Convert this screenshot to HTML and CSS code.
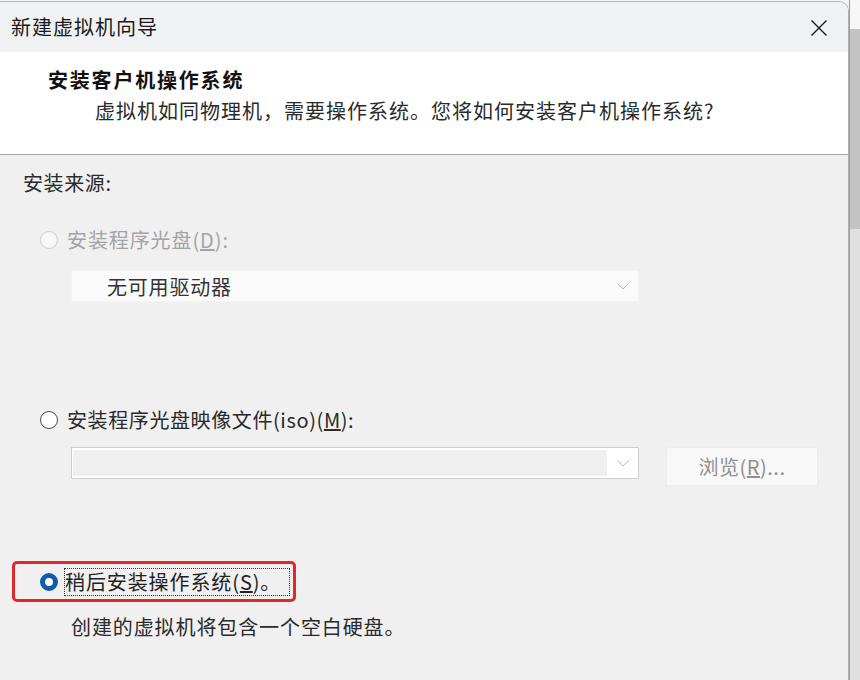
FILE: index.html
```html
<!DOCTYPE html>
<html lang="zh-CN">
<head>
<meta charset="utf-8">
<link rel="stylesheet" href="styles.css">
</head>
<body>
<div class="screen">
  <div class="window">
    <div class="titlebar">
      <span class="title">新建虚拟机向导</span>
      <svg class="close" width="18" height="18" viewBox="0 0 18 18"><path d="M1.5 1.5 L16.5 16.5 M16.5 1.5 L1.5 16.5" stroke="#1a1a1a" stroke-width="1.4" fill="none"/></svg>
    </div>
    <div class="header">
      <div class="heading">安装客户机操作系统</div>
      <div class="subtitle">虚拟机如同物理机，需要操作系统。您将如何安装客户机操作系统?</div>
    </div>
    <div class="content">
      <div class="section-label">安装来源:</div>

      <div class="radio-row disabled">
        <span class="radio"></span>
        <span class="label">安装程序光盘(<u>D</u>):</span>
      </div>
      <div class="select disabled-select">
        <span class="select-text">无可用驱动器</span>
        <svg class="chev" width="12" height="7" viewBox="0 0 12 7"><path d="M0.5 0.5 L6 6 L11.5 0.5" stroke="#b8b8b8" stroke-width="1" fill="none"/></svg>
      </div>

      <div class="radio-row second">
        <span class="radio"></span>
        <span class="label">安装程序光盘映像文件(iso)(<u>M</u>):</span>
      </div>
      <div class="iso-row">
        <div class="combo">
          <div class="combo-field"></div>
          <div class="combo-btn">
            <svg width="12" height="7" viewBox="0 0 12 7"><path d="M0.5 0.5 L6 6 L11.5 0.5" stroke="#b8b8b8" stroke-width="1" fill="none"/></svg>
          </div>
        </div>
        <div class="browse">浏览(<u>R</u>)...</div>
      </div>

      <div class="highlight">
        <div class="radio-row checked">
          <span class="radio"></span>
          <span class="label focus">稍后安装操作系统(<u>S</u>)。</span>
        </div>
      </div>
      <div class="desc">创建的虚拟机将包含一个空白硬盘。</div>
    </div>
  </div>
  <div class="side">
    <div class="side-top"></div>
    <div class="side-thumb"></div>
    <div class="side-rest"></div>
  </div>
</div>
</body>
</html>
```

FILE: styles.css
```css
html, body {
  margin: 0;
  padding: 0;
  width: 860px;
  height: 680px;
  overflow: hidden;
  background: #f4f4f4;
  font-family: "Noto Sans CJK SC", "Noto Sans", sans-serif;
  color: #1e1e1e;
}

.screen {
  display: flex;
  width: 860px;
  height: 680px;
}

.window {
  width: 849px;
  height: 679px;
  flex: none;
  border-top: 1px solid #b4b4b4;
  border-right: 1px solid #b0b0b0;
  border-top-right-radius: 10px;
  overflow: hidden;
  background: #f0f0f0;
  margin-top: 1px;
  box-sizing: border-box;
}

.titlebar {
  height: 50px;
  background: #f0f1f3;
  display: flex;
  align-items: center;
  justify-content: space-between;
  padding: 0 20px 0 11px;
}

.title {
  font-size: 20px;
  line-height: 30px;
  color: #1a1a1a;
  letter-spacing: 1px;
}

.close {
  display: block;
  margin-top: 2px;
}

.header {
  background: #ffffff;
  border-bottom: 1px solid #a6a6a6;
  padding-top: 13px;
  box-sizing: border-box;
  height: 103px;
}

.heading {
  font-size: 20px;
  line-height: 30px;
  font-weight: bold;
  padding-left: 48px;
  letter-spacing: 1.8px;
  color: #111;
}

.subtitle {
  font-size: 20px;
  line-height: 30px;
  padding-left: 95px;
  margin-top: 1px;
  letter-spacing: 1px;
  color: #2a2a2a;
}

.content {
  padding-top: 13px;
}

.section-label {
  font-size: 20px;
  line-height: 30px;
  padding-left: 23px;
  color: #2a2a2a;
  letter-spacing: 0.6px;
}

.radio-row {
  display: flex;
  align-items: center;
  height: 30px;
  padding-left: 40px;
  font-size: 20px;
}

.radio-row.disabled {
  margin-top: 27px;
}

.radio {
  width: 18px;
  height: 18px;
  border-radius: 50%;
  box-sizing: border-box;
  border: 1px solid #4a4a4a;
  background: #ffffff;
  flex: none;
  margin-right: 9px;
}

.label {
  line-height: 30px;
  letter-spacing: 0.9px;
  color: #2a2a2a;
}

.radio-row.second .label {
  letter-spacing: 0.6px;
}

.disabled .radio {
  border-color: #cdcdcd;
  background: #f7f7f7;
}

.disabled .label {
  color: #a3a3a3;
}

.select {
  margin: 15px 0 0 71px;
  width: 568px;
  height: 32px;
  box-sizing: border-box;
  display: flex;
  align-items: center;
  justify-content: space-between;
  padding: 0 9px 0 35px;
}

.disabled-select {
  background: #fafafa;
  border: 1px solid #f3f3f3;
}

.select-text {
  font-size: 20px;
  color: #333;
  letter-spacing: 0.8px;
}

.chev {
  display: block;
}

.radio-row.second {
  margin-top: 103px;
}

.iso-row {
  display: flex;
  align-items: flex-start;
  margin: 12px 0 0 71px;
  gap: 27px;
}

.combo {
  width: 568px;
  height: 32px;
  box-sizing: border-box;
  border: 1px solid #cfcfcf;
  background: #ffffff;
  display: flex;
  padding: 2px 0 2px 1px;
}

.combo-field {
  flex: 1;
  background: #efefef;
}

.combo-btn {
  width: 31px;
  display: flex;
  align-items: center;
  justify-content: center;
}

.combo-btn svg {
  display: block;
}

.browse {
  width: 152px;
  height: 39px;
  box-sizing: border-box;
  background: #f8f8f8;
  border: 1px solid #ececec;
  border-radius: 2px;
  display: flex;
  align-items: center;
  justify-content: center;
  font-size: 20px;
  color: #8f8f8f;
  letter-spacing: 0.5px;
}

.highlight {
  margin: 75px 0 0 12px;
  width: 284px;
  height: 41px;
  box-sizing: border-box;
  border: 3px solid #e2282a;
  border-radius: 5px;
  display: flex;
  align-items: center;
}

.highlight .radio-row {
  padding-left: 25px;
}

.checked .radio {
  border: 5px solid #0f5cad;
  background: #ffffff;
  margin-right: 7px;
}

.label.focus {
  outline: 1px dotted #333;
  line-height: 26px;
  padding: 0 8px 0 0;
  color: #222;
}

.desc {
  font-size: 20px;
  line-height: 30px;
  padding-left: 71px;
  margin-top: 10px;
  color: #2a2a2a;
  letter-spacing: 0.9px;
}

.side {
  flex: 1;
  display: flex;
  flex-direction: column;
  border-left: 1px solid #9c9c9c;
}

.side-top {
  height: 29px;
  background: #f6f6f6;
}

.side-thumb {
  height: 200px;
  background: #c3c3c3;
}

.side-rest {
  flex: 1;
  background: #e0e0e0;
}
```
